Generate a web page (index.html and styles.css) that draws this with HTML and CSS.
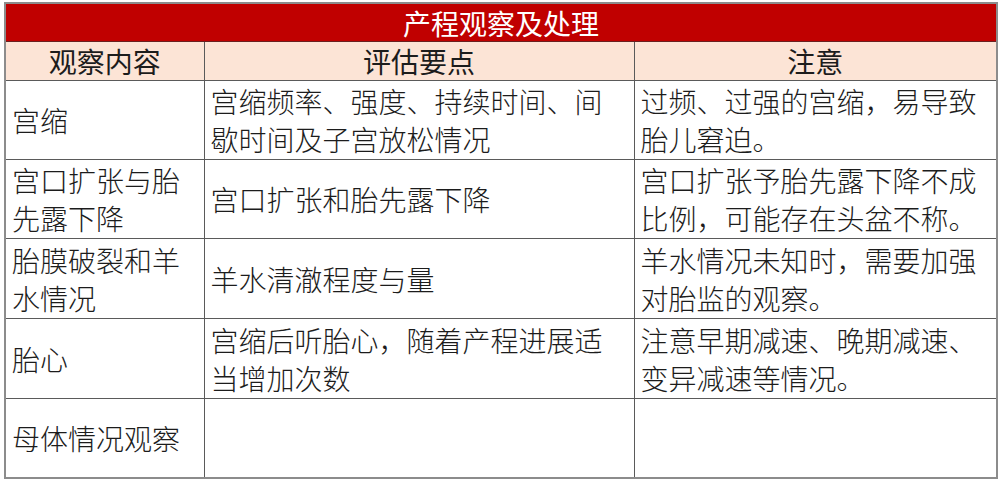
FILE: index.html
```html
<!DOCTYPE html>
<html lang="zh-CN">
<head>
<meta charset="utf-8">
<link rel="stylesheet" href="styles.css">
</head>
<body>
<table class="sheet">
  <colgroup>
    <col class="c1"><col class="c2"><col class="c3">
  </colgroup>
  <tr class="title"><td colspan="3">产程观察及处理</td></tr>
  <tr class="head"><td>观察内容</td><td>评估要点</td><td>注意</td></tr>
  <tr class="r1"><td>宫缩</td><td>宫缩频率、强度、持续时间、间歇时间及子宫放松情况</td><td>过频、过强的宫缩，易导致胎儿窘迫。</td></tr>
  <tr class="r2"><td>宫口扩张与胎先露下降</td><td>宫口扩张和胎先露下降</td><td>宫口扩张予胎先露下降不成比例，可能存在头盆不称。</td></tr>
  <tr class="r3"><td>胎膜破裂和羊水情况</td><td>羊水清澈程度与量</td><td>羊水情况未知时，需要加强对胎监的观察。</td></tr>
  <tr class="r3"><td>胎心</td><td>宫缩后听胎心，随着产程进展适当增加次数</td><td>注意早期减速、晚期减速、变异减速等情况。</td></tr>
  <tr class="r4"><td>母体情况观察</td><td></td><td></td></tr>
</table>
</body>
</html>
```

FILE: styles.css
```css
html, body {
  margin: 0;
  padding: 0;
  background: #ffffff;
}
body {
  padding: 2px 0 0 4px;
}
.sheet {
  border-collapse: collapse;
  table-layout: fixed;
  width: 992px;
  font-family: "Noto Sans CJK SC", "Noto Sans", sans-serif;
  font-size: 28px;
  font-weight: 300;
  line-height: 38px;
  color: #1c1c1c;
  border: 2px solid #8c8c8c;
}
.c1 { width: 199px; }
.c2 { width: 430px; }
.c3 { width: 363px; }
.sheet td {
  border: 1px solid #5a5a5a;
  padding: 0 5px 0 6px;
  vertical-align: middle;
  word-break: break-all;
}
.title td {
  background: #c00000;
  color: #ffffff;
  text-align: center;
  height: 37px;
  line-height: 34px;
  font-weight: 400;
  padding: 0;
  border-color: #6a2020;
}
.head td {
  background: #fce4d6;
  text-align: center;
  height: 38px;
  line-height: 34px;
  font-weight: 400;
  padding: 0;
}
.r1 td { height: 78px; }
.r2 td { height: 78px; }
.r3 td { height: 79px; }
.r4 td { height: 78px; }
```
